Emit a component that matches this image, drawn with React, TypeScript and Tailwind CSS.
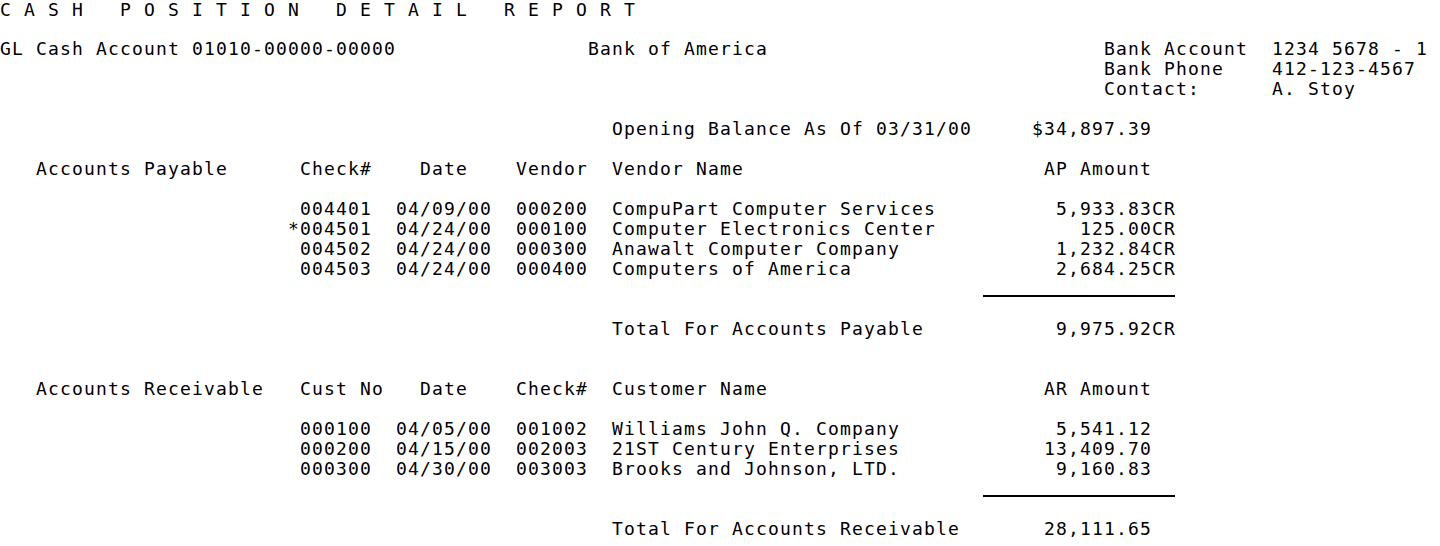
import React from 'react';

type Seg = [number, string];

// builds a fixed-width line from [column, text] pairs
const line = (segs: Seg[], right?: [number, string]) => {
  let s = '';
  for (const [col, text] of segs) {
    s = s.padEnd(col, ' ') + text;
  }
  if (right) {
    const [endCol, text] = right;
    s = s.padEnd(endCol - text.length, ' ') + text;
  }
  return s;
};

const payables = [
  { flag: ' ', check: '004401', date: '04/09/00', vendor: '000200', name: 'CompuPart Computer Services', amount: '5,933.83', cr: true },
  { flag: '*', check: '004501', date: '04/24/00', vendor: '000100', name: 'Computer Electronics Center', amount: '125.00', cr: true },
  { flag: ' ', check: '004502', date: '04/24/00', vendor: '000300', name: 'Anawalt Computer Company', amount: '1,232.84', cr: true },
  { flag: ' ', check: '004503', date: '04/24/00', vendor: '000400', name: 'Computers of America', amount: '2,684.25', cr: true },
];

const receivables = [
  { cust: '000100', date: '04/05/00', check: '001002', name: 'Williams John Q. Company', amount: '5,541.12' },
  { cust: '000200', date: '04/15/00', check: '002003', name: '21ST Century Enterprises', amount: '13,409.70' },
  { cust: '000300', date: '04/30/00', check: '003003', name: 'Brooks and Johnson, LTD.', amount: '9,160.83' },
];

const Row: React.FC<{ text?: string }> = ({ text = '' }) => (
  <div className="h-[20px] whitespace-pre">{text}</div>
);

const Rule: React.FC = () => (
  <div className="h-[20px] flex items-end">
    <div className="ml-[983px] w-[192px] h-[2px] mb-[2px] bg-black" />
  </div>
);

const App: React.FC = () => {
  return (
    <div
      className="w-[1440px] h-[546px] bg-white text-black overflow-hidden text-[18px] leading-[20px] tracking-[1.164px]"
      style={{ fontFamily: '"DejaVu Sans Mono", "Liberation Mono", monospace' }}
    >
      <div className="h-[19px] whitespace-pre">C A S H   P O S I T I O N   D E T A I L   R E P O R T</div>
      <Row />
      <Row text={line([[0, 'GL Cash Account 01010-00000-00000'], [49, 'Bank of America'], [92, 'Bank Account'], [106, '1234 5678 - 1']])} />
      <Row text={line([[92, 'Bank Phone'], [106, '412-123-4567']])} />
      <Row text={line([[92, 'Contact:'], [106, 'A. Stoy']])} />
      <Row />
      <Row text={line([[51, 'Opening Balance As Of 03/31/00']], [96, '$34,897.39'])} />
      <Row />
      <Row text={line([[3, 'Accounts Payable'], [25, 'Check#'], [35, 'Date'], [43, 'Vendor'], [51, 'Vendor Name']], [96, 'AP Amount'])} />
      <Row />
      {payables.map((p) => (
        <Row
          key={p.check}
          text={line([[24, p.flag + p.check], [33, p.date], [43, p.vendor], [51, p.name]], [96, p.amount]) + (p.cr ? 'CR' : '')}
        />
      ))}
      <Rule />
      <Row />
      <Row text={line([[51, 'Total For Accounts Payable']], [96, '9,975.92']) + 'CR'} />
      <Row />
      <Row />
      <Row text={line([[3, 'Accounts Receivable'], [25, 'Cust No'], [35, 'Date'], [43, 'Check#'], [51, 'Customer Name']], [96, 'AR Amount'])} />
      <Row />
      {receivables.map((r) => (
        <Row
          key={r.cust}
          text={line([[25, r.cust], [33, r.date], [43, r.check], [51, r.name]], [96, r.amount])}
        />
      ))}
      <Rule />
      <Row />
      <Row text={line([[51, 'Total For Accounts Receivable']], [96, '28,111.65'])} />
    </div>
  );
};

export default App;
